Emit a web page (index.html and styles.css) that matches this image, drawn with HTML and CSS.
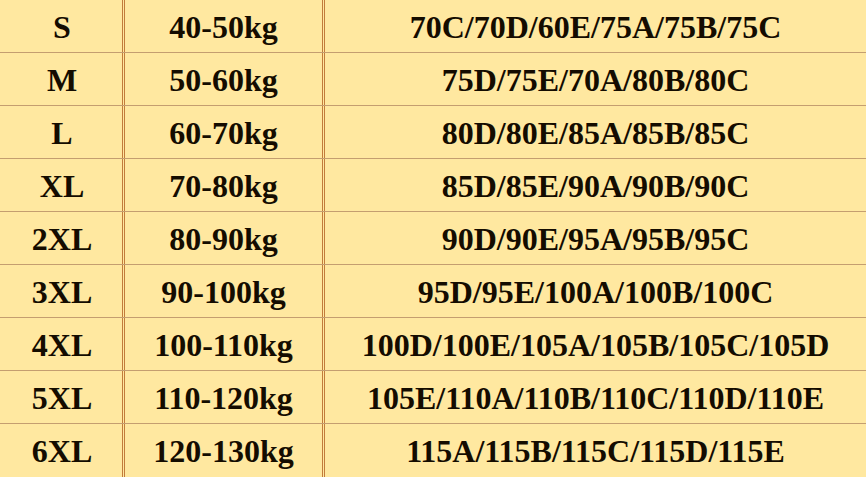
FILE: index.html
```html
<!DOCTYPE html>
<html>
<head>
<meta charset="utf-8">
<link rel="stylesheet" href="styles.css">
</head>
<body>
<div class="table">
  <div class="row"><div class="c c1">S</div><div class="c c2">40-50kg</div><div class="c c3">70C/70D/60E/75A/75B/75C</div></div>
  <div class="row"><div class="c c1">M</div><div class="c c2">50-60kg</div><div class="c c3">75D/75E/70A/80B/80C</div></div>
  <div class="row"><div class="c c1">L</div><div class="c c2">60-70kg</div><div class="c c3">80D/80E/85A/85B/85C</div></div>
  <div class="row"><div class="c c1">XL</div><div class="c c2">70-80kg</div><div class="c c3">85D/85E/90A/90B/90C</div></div>
  <div class="row"><div class="c c1">2XL</div><div class="c c2">80-90kg</div><div class="c c3">90D/90E/95A/95B/95C</div></div>
  <div class="row"><div class="c c1">3XL</div><div class="c c2">90-100kg</div><div class="c c3">95D/95E/100A/100B/100C</div></div>
  <div class="row"><div class="c c1">4XL</div><div class="c c2">100-110kg</div><div class="c c3">100D/100E/105A/105B/105C/105D</div></div>
  <div class="row"><div class="c c1">5XL</div><div class="c c2">110-120kg</div><div class="c c3">105E/110A/110B/110C/110D/110E</div></div>
  <div class="row last"><div class="c c1">6XL</div><div class="c c2">120-130kg</div><div class="c c3">115A/115B/115C/115D/115E</div></div>
</div>
</body>
</html>
```
FILE: styles.css
```css
html, body {
  margin: 0;
  padding: 0;
  background: #ffe8a0;
  height: 100%;
  overflow: hidden;
}
.table {
  width: 866px;
  font-family: "Liberation Serif", "Times New Roman", serif;
  font-weight: bold;
  font-size: 32px;
  color: #140c00;
}
.row {
  display: grid;
  grid-template-columns: 125px 200px 1fr;
  height: 53px;
  box-sizing: border-box;
  border-bottom: 1px solid #c49e70;
}
.row.last {
  border-bottom: none;
}
.c {
  display: flex;
  align-items: center;
  justify-content: center;
  box-sizing: border-box;
  padding-top: 2px;
}
.c1, .c2 {
  border-right: 3px double #c27c3c;
}
.c1 {
  padding-left: 2px;
}
```
